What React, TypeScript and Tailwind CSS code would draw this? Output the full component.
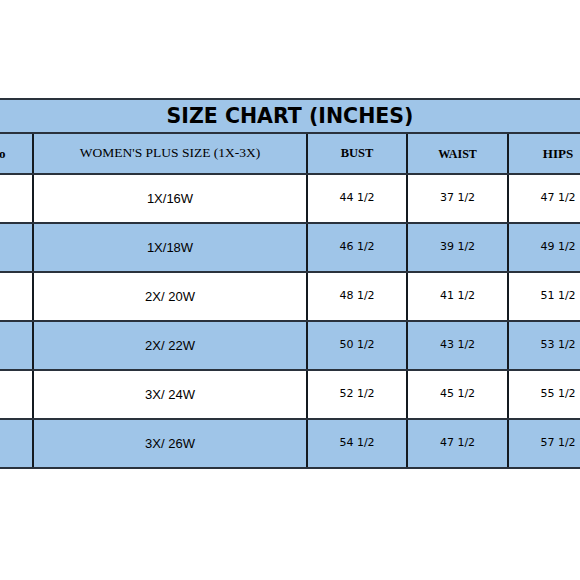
import React from "react";

const rows = [
  { size: "1X/16W", bust: "44 1/2", waist: "37 1/2", hips: "47 1/2", blue: false },
  { size: "1X/18W", bust: "46 1/2", waist: "39 1/2", hips: "49 1/2", blue: true },
  { size: "2X/ 20W", bust: "48 1/2", waist: "41 1/2", hips: "51 1/2", blue: false },
  { size: "2X/ 22W", bust: "50 1/2", waist: "43 1/2", hips: "53 1/2", blue: true },
  { size: "3X/ 24W", bust: "52 1/2", waist: "45 1/2", hips: "55 1/2", blue: false },
  { size: "3X/ 26W", bust: "54 1/2", waist: "47 1/2", hips: "57 1/2", blue: true },
];

const serif = "font-['Liberation_Serif','Times_New_Roman',serif]";
const verdana = "font-['DejaVu_Sans',Verdana,sans-serif]";
const arial = "font-['Liberation_Sans',Arial,sans-serif]";

export default function App() {
  return (
    <div className="w-[580px] h-[580px] overflow-hidden bg-white">
      <div className="mt-[98px] w-[640px] border-t-2 border-[#2a323c]">
        <div className="h-[34px] bg-[#9fc5e8] border-b-2 border-[#2a323c]">
          <div className={`w-[580px] h-full flex items-center justify-center text-[20.5px] font-bold text-black ${verdana}`}>
            SIZE CHART (INCHES)
          </div>
        </div>
        <div className="flex h-[41px] bg-[#9fc5e8] border-b-2 border-[#2a323c] text-black">
          <div className={`w-[34px] border-r-2 border-[#141a20] flex items-center text-[13px] font-bold ${serif}`}>
            <span className="-ml-[1px]">o</span>
          </div>
          <div className={`w-[274px] border-r-2 border-[#141a20] flex items-center justify-center text-[13.5px] ${serif}`}>
            WOMEN'S PLUS SIZE (1X-3X)
          </div>
          <div className={`w-[100px] border-r-2 border-[#141a20] flex items-center justify-center text-[12.5px] font-bold ${serif}`}>
            BUST
          </div>
          <div className={`w-[101px] border-r-2 border-[#141a20] flex items-center justify-center text-[12px] font-bold ${serif}`}>
            WAIST
          </div>
          <div className={`w-[98px] flex items-center justify-center text-[13px] font-bold ${serif}`}>
            HIPS
          </div>
        </div>
        {rows.map((r, i) => (
          <div
            key={i}
            className={`flex h-[49px] border-b-2 border-[#2a323c] text-black ${r.blue ? "bg-[#9fc5e8]" : "bg-white"}`}
          >
            <div className="w-[34px] border-r-2 border-[#141a20]" />
            <div className={`w-[274px] border-r-2 border-[#141a20] flex items-center justify-center text-[13px] ${arial}`}>
              {r.size}
            </div>
            <div className={`w-[100px] border-r-2 border-[#141a20] flex items-center justify-center text-[11px] ${verdana}`}>
              {r.bust}
            </div>
            <div className={`w-[101px] border-r-2 border-[#141a20] flex items-center justify-center text-[11px] ${verdana}`}>
              {r.waist}
            </div>
            <div className={`w-[98px] flex items-center justify-center text-[11px] ${verdana}`}>
              {r.hips}
            </div>
          </div>
        ))}
      </div>
    </div>
  );
}
